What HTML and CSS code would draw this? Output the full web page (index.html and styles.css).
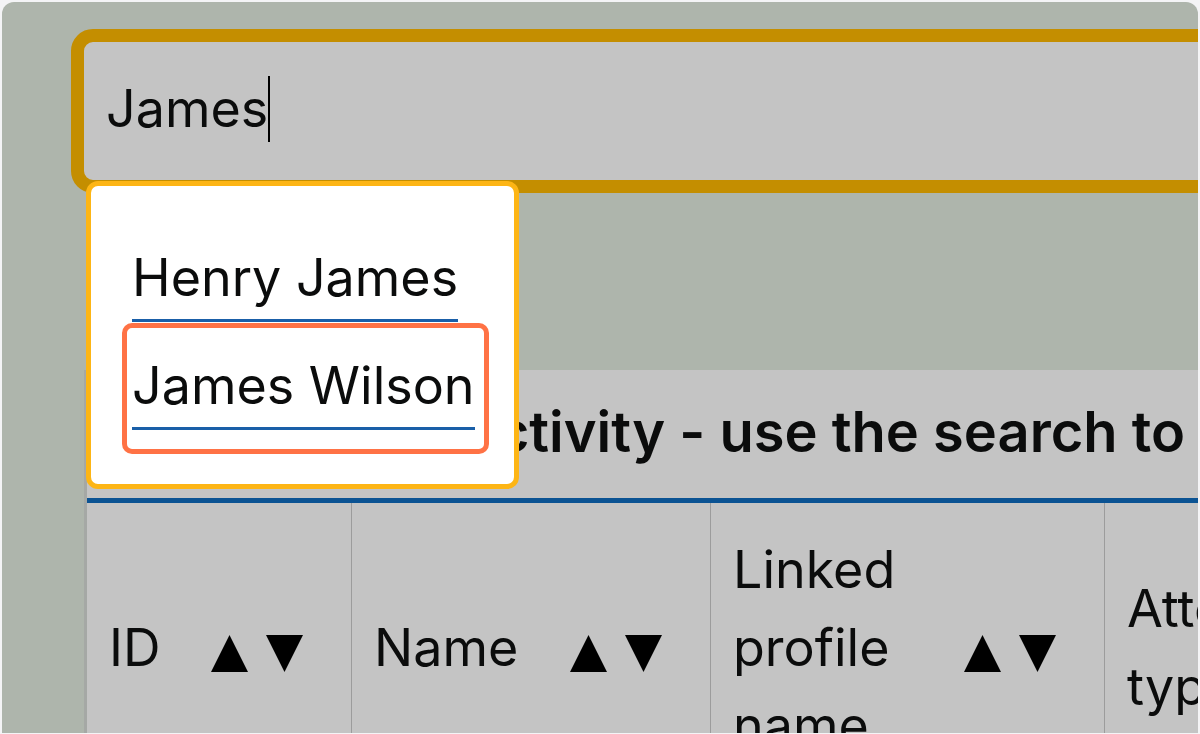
FILE: index.html
```html
<!DOCTYPE html>
<html lang="en">
<head>
<meta charset="utf-8">
<title>Profile search</title>
<link rel="stylesheet" href="styles.css">
</head>
<body>
<div class="frame">
  <div class="search">
    <div class="field" role="combobox" aria-expanded="true"><span class="value">James</span><span class="caret"></span></div>
    <ul class="suggestions" role="listbox">
      <li class="option"><a class="option-link" href="#">Henry James</a></li>
      <li class="option is-focused"><a class="option-link" href="#">James Wilson</a></li>
    </ul>
  </div>
  <div class="panel">
    <div class="caption">Latest profile activity - use the search to filter</div>
    <table class="activity">
      <thead>
        <tr>
          <th class="col-id"><div class="th-inner"><span class="label">ID</span><span class="sort"><svg viewBox="0 0 37 37"><polygon points="18.5,0 37,37 0,37"/></svg><svg viewBox="0 0 37 37"><polygon points="0,0 37,0 18.5,37"/></svg></span></div></th>
          <th class="col-name"><div class="th-inner"><span class="label">Name</span><span class="sort"><svg viewBox="0 0 37 37"><polygon points="18.5,0 37,37 0,37"/></svg><svg viewBox="0 0 37 37"><polygon points="0,0 37,0 18.5,37"/></svg></span></div></th>
          <th class="col-linked"><div class="th-inner"><span class="label">Linked profile name</span><span class="sort"><svg viewBox="0 0 37 37"><polygon points="18.5,0 37,37 0,37"/></svg><svg viewBox="0 0 37 37"><polygon points="0,0 37,0 18.5,37"/></svg></span></div></th>
          <th class="col-type"><div class="th-inner"><span class="label">Attendance type</span><span class="sort"><svg viewBox="0 0 37 37"><polygon points="18.5,0 37,37 0,37"/></svg><svg viewBox="0 0 37 37"><polygon points="0,0 37,0 18.5,37"/></svg></span></div></th>
        </tr>
      </thead>
    </table>
  </div>
</div>
</body>
</html>
```
FILE: styles.css
```css
body {
  margin: 0;
  background: #f4f4f6;
  font-family: Inter, "Noto Sans", sans-serif;
  color: #0b0c0c;
}

.frame {
  margin: 2px 2px 0;
  height: 731px;
  background: #aeb5ac;
  border-radius: 12px 12px 0 0;
  overflow: hidden;
}

.search {
  position: relative;
  padding: 27px 0 0 69px;
}

.field {
  box-sizing: border-box;
  width: 1200px;
  height: 164px;
  border: 13px solid #c48e00;
  border-radius: 22px;
  background: #c4c4c4;
  padding: 34px 0 0 22px;
  font-size: 52px;
  line-height: 66px;
  white-space: nowrap;
}

.caret {
  display: inline-block;
  width: 2px;
  height: 66px;
  background: #000;
  vertical-align: top;
}

.suggestions {
  position: absolute;
  left: 84px;
  top: 179px;
  width: 433px;
  height: 308px;
  box-sizing: border-box;
  margin: 0;
  padding: 60px 0 0 41px;
  list-style: none;
  background: #fff;
  border: 5px solid #fdb515;
  border-radius: 12px;
  z-index: 2;
}

.option {
  font-size: 52px;
  line-height: 64px;
}

.option + .option {
  margin-top: 32px;
}

.option-link {
  position: relative;
  display: inline-block;
  color: inherit;
  text-decoration: none;
  padding-bottom: 9px;
  border-bottom: 3px solid #1a5fa8;
}

.is-focused .option-link::after {
  content: "";
  position: absolute;
  top: -31px;
  bottom: -27px;
  left: -10px;
  right: -14px;
  border: 5px solid #ff7245;
  border-radius: 10px;
}

.panel {
  margin: 177px 0 0 82px;
  background: #c4c4c4;
  border-left: 3px solid #a5a8a5;
}

.caption {
  padding: 23px 0 27px 8px;
  font-size: 56px;
  line-height: 78px;
  font-weight: 600;
  white-space: nowrap;
  border-bottom: 5px solid #0b5393;
}

.activity {
  border-collapse: separate;
  border-spacing: 0;
  table-layout: fixed;
  width: 1417px;
}

.activity th {
  box-sizing: border-box;
  padding: 28px 48px 24px 22px;
  font-weight: 400;
  font-size: 52px;
  line-height: 78px;
  text-align: left;
  vertical-align: middle;
  border-left: 1px solid #9c9c9c;
}

.activity th:first-child {
  border-left: 0;
}

.col-id { width: 264px; }
.col-name { width: 359px; }
.col-linked { width: 394px; }
.col-type { width: 400px; }

.th-inner {
  display: flex;
  align-items: center;
  justify-content: space-between;
  gap: 24px;
}

.sort {
  display: flex;
  flex: none;
  gap: 18px;
  margin-top: 10px;
}

.sort svg {
  display: block;
  width: 37px;
  height: 37px;
  fill: #000;
}
```
